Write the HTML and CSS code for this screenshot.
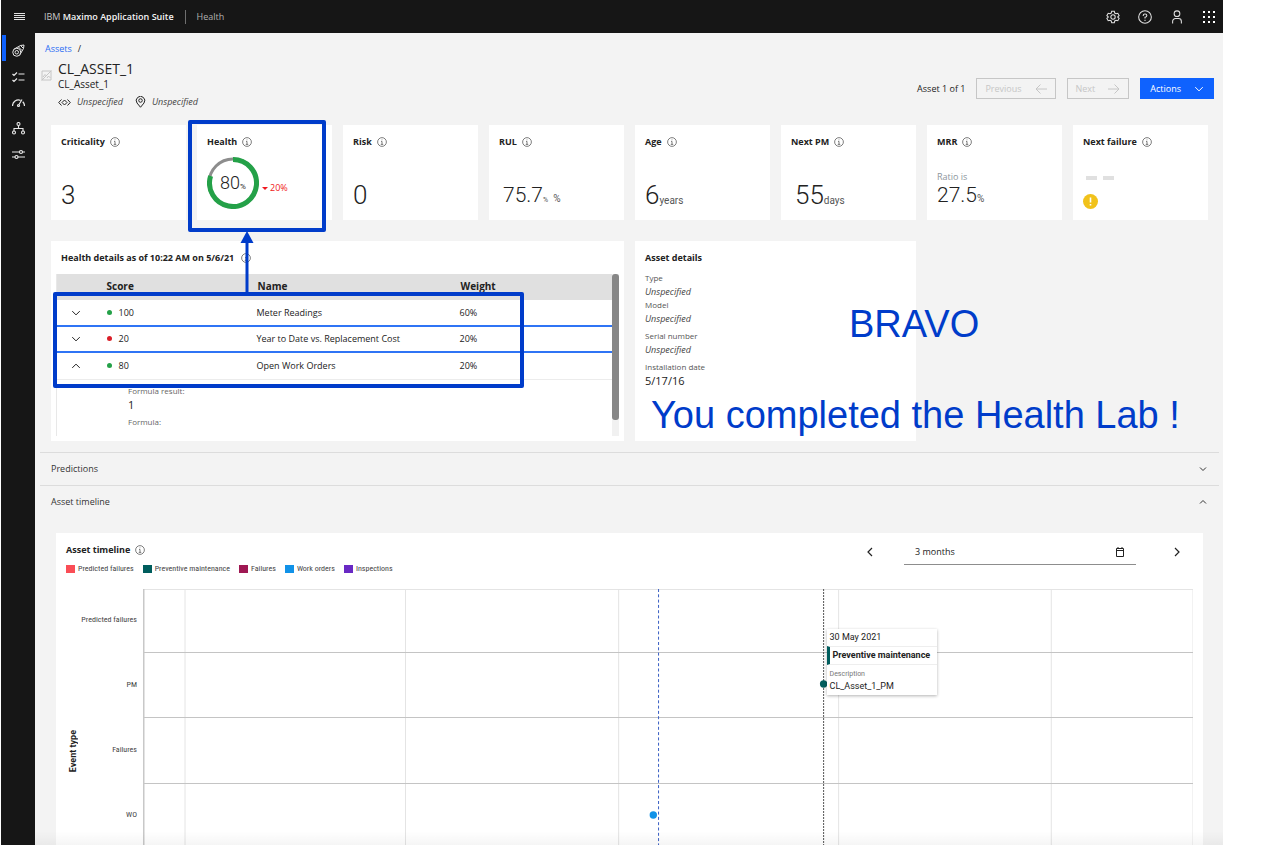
FILE: index.html
```html
<!DOCTYPE html>
<html lang="en">
<head>
<meta charset="utf-8">
<title>Maximo Application Suite - Health</title>
<link rel="stylesheet" href="styles.css">
</head>
<body>
<svg class="defs" aria-hidden="true">
  <symbol id="info" viewBox="0 0 16 16"><circle cx="8" cy="8" r="7" /><path d="M8 11.8V7H6.4M6 11.8h4M7.5 4.4h1" /></symbol>
  <symbol id="down" viewBox="0 0 16 16"><path d="M2 5l6 6 6-6" /></symbol>
  <symbol id="up" viewBox="0 0 16 16"><path d="M2 11l6-6 6 6" /></symbol>
</svg>
<div class="app">
  <header class="topbar">
    <button class="icon-btn menu" aria-label="Menu"><svg class="ico" width="11" height="10" viewBox="0 0 11 10"><path d="M0 1.5h11M0 3.5h11M0 5.5h11M0 7.5h11" /></svg></button>
    <span class="brand">IBM <b>Maximo Application Suite</b></span>
    <span class="product">Health</span>
    <div class="tools">
      <button class="icon-btn" aria-label="Settings"><svg class="ico" width="14" height="14" viewBox="0 0 32 32" stroke-width="2.4"><circle cx="16" cy="16" r="5" /><path d="M13 3h6l1 4 3 1.700 4-1.200 3 5.200-3 2.700v1.200l3 2.700-3 5.200-4-1.200-3 1.700-1 4h-6l-1-4-3-1.700-4 1.200-3-5.200 3-2.700v-1.200l-3-2.700 3-5.200 4 1.200 3-1.700z" /></svg></button>
      <button class="icon-btn" aria-label="Help"><svg class="ico" width="14" height="14" viewBox="0 0 32 32" stroke-width="2.400"><circle cx="16" cy="16" r="14.500" /><path d="M12 13.500v-1a3.500 3.500 0 0 1 3.500-3.500h1a3.700 3.700 0 0 1 0 7.400H16v3M16 22v3" /></svg></button>
      <button class="icon-btn" aria-label="User"><svg class="ico" width="14" height="14" viewBox="0 0 32 32" stroke-width="2.400"><circle cx="16" cy="8.500" r="6.500" /><path d="M6 31v-5a6.500 6.500 0 0 1 6.500-6.500h7A6.500 6.500 0 0 1 26 26v5" /></svg></button>
      <button class="icon-btn" aria-label="App switcher"><svg class="dots" width="14" height="14" viewBox="0 0 14 14"><path d="M1 1h2v2H1zM6 1h2v2H6zM11 1h2v2h-2zM1 6h2v2H1zM6 6h2v2H6zM11 6h2v2h-2zM1 11h2v2H1zM6 11h2v2H6zM11 11h2v2h-2z" /></svg></button>
    </div>
  </header>
  <div class="shell">
    <nav class="rail">
      <a class="rail-item current" href="#assets" aria-label="Assets"><svg class="ico" width="13" height="13" viewBox="0 0 26 26" stroke-width="2"><circle cx="9.500" cy="16.500" r="8" /><circle cx="9.500" cy="16.500" r="3.500" /><path d="M4.500 10L17 3l7-1-1 7-7 12M17 3l6 6M13 6l7 7" /></svg></a>
      <a class="rail-item" href="#work" aria-label="Work"><svg class="ico" width="13" height="13" viewBox="0 0 26 26" stroke-width="2.400"><path d="M13 8h12M13 20h12M1 8l3 3 6-6M1 20l3 3 6-6" /></svg></a>
      <a class="rail-item" href="#scores" aria-label="Scores"><svg class="ico" width="13" height="13" viewBox="0 0 26 26" stroke-width="2.400"><path d="M1 20a12 12 0 0 1 16-11.300M21.500 11.500A12 12 0 0 1 25 20M20 7l-6 10" /><circle cx="13" cy="19" r="2" /></svg></a>
      <a class="rail-item" href="#groups" aria-label="Groups"><svg class="ico" width="13" height="13" viewBox="0 0 26 26" stroke-width="2.200"><circle cx="13" cy="4" r="3" /><circle cx="4" cy="21" r="3" /><circle cx="22" cy="21" r="3" /><path d="M13 7v6M4 18v-5h18v5" /></svg></a>
      <a class="rail-item" href="#settings" aria-label="Configure"><svg class="ico" width="13" height="13" viewBox="0 0 26 26" stroke-width="2.400"><path d="M0 8h15M21 8h5M0 18h6M12 18h14" /><circle cx="18" cy="8" r="3" /><circle cx="9" cy="18" r="3" /></svg></a>
    </nav>
    <main class="main">
      <nav class="crumbs"><a href="#assets">Assets</a><span>/</span></nav>
      <div class="head">
        <svg class="ico noimage" width="11" height="11" viewBox="0 0 22 22" stroke-width="2"><path d="M2 2h18v18H2zM1 21L21 1M4 14l4-5 3 3M12 16l3-4 4 4" /></svg>
        <div class="title-block">
          <h1>CL_ASSET_1</h1>
          <p class="subtitle">CL_Asset_1</p>
          <p class="meta">
            <svg class="ico" width="13" height="9" viewBox="0 0 26 18" stroke-width="2"><path d="M7 3L1.500 9 7 15M19 3l5.500 6-5.500 6M13 4L8 9l5 5 5-5z" /></svg><em>Unspecified</em>
            <svg class="ico pin" width="11" height="12" viewBox="0 0 22 24" stroke-width="2"><path d="M11 22.500L4 14A8.500 8.500 0 1 1 18 14z" /><circle cx="11" cy="9" r="3.500" /></svg><em>Unspecified</em>
          </p>
        </div>
        <div class="actions">
          <span>Asset 1 of 1</span>
          <button class="btn" disabled>Previous <svg class="ico" width="12" height="10" viewBox="0 0 12 10"><path d="M12 5H1M5.500 .5L1 5l4.500 4.500" /></svg></button>
          <button class="btn" disabled>Next <svg class="ico" width="12" height="10" viewBox="0 0 12 10"><path d="M0 5h11M6.500 .5L11 5 6.500 9.500" /></svg></button>
          <button class="btn primary">Actions <svg class="ico" width="10" height="10" stroke-width="1.600"><use href="#down" /></svg></button>
        </div>
      </div>

      <div class="board">
        <section class="card kpi"><h2>Criticality <svg class="info"><use href="#info" /></svg></h2><p class="value xl">3</p></section>
        <section class="card kpi health"><h2>Health <svg class="info"><use href="#info" /></svg></h2>
          <div class="gauge-row">
            <div class="gauge">
              <svg width="52" height="52" viewBox="0 0 52 52"><circle class="rest" cx="26" cy="26" r="24" /><path class="score" d="M26 2.500A23.500 23.500 0 1 1 3.600 19" /></svg>
              <span class="gauge-text">80<small>%</small></span>
            </div>
            <span class="trend">20%</span>
          </div>
        </section>
        <section class="card kpi"><h2>Risk <svg class="info"><use href="#info" /></svg></h2><p class="value xl">0</p></section>
        <section class="card kpi"><h2>RUL <svg class="info"><use href="#info" /></svg></h2><p class="value indent">75.7<small class="tiny">%</small> <small>%</small></p></section>
        <section class="card kpi"><h2>Age <svg class="info"><use href="#info" /></svg></h2><p class="value xl">6<small>years</small></p></section>
        <section class="card kpi"><h2>Next PM <svg class="info"><use href="#info" /></svg></h2><p class="value xl indent">55<small>days</small></p></section>
        <section class="card kpi"><h2>MRR <svg class="info"><use href="#info" /></svg></h2><div class="ratio"><p>Ratio is</p><p class="value">27.5<small>%</small></p></div></section>
        <section class="card kpi"><h2>Next failure <svg class="info"><use href="#info" /></svg></h2>
          <div class="empty"><span class="dashes"><i></i><i></i></span><svg width="15" height="15" viewBox="0 0 15 15"><circle class="warn" cx="7.500" cy="7.500" r="7.500" /><path class="warn-mark" d="M7.500 3.500v5M7.500 10v1.500" /></svg></div>
        </section>

        <section class="card details">
          <h2>Health details as of 10:22 AM on 5/6/21 <svg class="info"><use href="#info" /></svg></h2>
          <div class="scroller">
            <table class="scores">
              <colgroup><col class="c-toggle"><col class="c-score"><col class="c-name"><col></colgroup>
              <thead><tr><th></th><th>Score</th><th>Name</th><th>Weight</th></tr></thead>
              <tbody>
                <tr class="ruled"><td><button class="icon-btn" aria-label="Expand"><svg class="ico" width="10" height="10" stroke-width="1.600"><use href="#down" /></svg></button></td><td><i class="dot good"></i>100</td><td>Meter Readings</td><td>60%</td></tr>
                <tr class="ruled"><td><button class="icon-btn" aria-label="Expand"><svg class="ico" width="10" height="10" stroke-width="1.600"><use href="#down" /></svg></button></td><td><i class="dot bad"></i>20</td><td>Year to Date vs. Replacement Cost</td><td>20%</td></tr>
                <tr class="open"><td><button class="icon-btn" aria-label="Collapse"><svg class="ico" width="10" height="10" stroke-width="1.600"><use href="#up" /></svg></button></td><td><i class="dot good"></i>80</td><td>Open Work Orders</td><td>20%</td></tr>
                <tr><td class="formula" colspan="4"><p class="label">Formula result:</p><p class="result">1</p><p class="label">Formula:</p></td></tr>
              </tbody>
            </table>
            <div class="track"><div class="thumb"></div></div>
          </div>
          <div class="frame-rows"></div>
          <svg class="arrow" width="14" height="62" viewBox="0 0 14 62"><path d="M7 10v52" stroke-width="3" /><path class="tip" d="M7 0l6.500 12H.5z" /></svg>
        </section>

        <section class="card asset">
          <h2>Asset details</h2>
          <dl>
            <dt>Type</dt><dd><em>Unspecified</em></dd>
            <dt>Model</dt><dd class="wide"><em>Unspecified</em></dd>
            <dt>Serial number</dt><dd class="wide"><em>Unspecified</em></dd>
            <dt>Installation date</dt><dd class="date">5/17/16</dd>
          </dl>
          <p class="note bravo">BRAVO</p>
          <p class="note done">You completed the Health Lab !</p>
        </section>
      </div>

      <button class="section-toggle">Predictions <svg class="ico" width="8" height="8" stroke-width="2"><use href="#down" /></svg></button>
      <button class="section-toggle">Asset timeline <svg class="ico" width="8" height="8" stroke-width="2"><use href="#up" /></svg></button>

      <section class="timeline">
        <div class="timeline-head">
          <div>
            <h2>Asset timeline <svg class="info"><use href="#info" /></svg></h2>
            <ul class="legend">
              <li class="k-pred">Predicted failures</li><li class="k-pm">Preventive maintenance</li><li class="k-fail">Failures</li><li class="k-wo">Work orders</li><li class="k-insp">Inspections</li>
            </ul>
          </div>
          <div class="range">
            <button class="icon-btn" aria-label="Earlier"><svg class="ico" width="10" height="10" viewBox="0 0 10 10" stroke-width="1.200"><path d="M7 1L3 5l4 4" /></svg></button>
            <label class="period"><input type="text" value="3 months" aria-label="Period"><svg class="ico" width="10" height="10" viewBox="0 0 10 10"><path d="M1.500 1.500h7v8h-7zM1.500 3.500h7M3 0v2M7 0v2" /></svg></label>
            <button class="icon-btn" aria-label="Later"><svg class="ico" width="10" height="10" viewBox="0 0 10 10" stroke-width="1.200"><path d="M3 1l4 4-4 4" /></svg></button>
          </div>
        </div>
        <div class="chart">
          <div class="axis-title">Event type</div>
          <div class="axis"><span>Predicted failures</span><span>PM</span><span>Failures</span><span>WO</span></div>
          <div class="plot">
            <svg class="grid" width="100%" height="100%">
              <g stroke="#e4e4e4"><path d="M0 .5h4000" /><line x1="4%" x2="4%" y1="0" y2="100%" /><line x1="25%" x2="25%" y1="0" y2="100%" /><line x1="45.300%" x2="45.300%" y1="0" y2="100%" /><line x1="66.250%" x2="66.250%" y1="0" y2="100%" /><line x1="86.500%" x2="86.500%" y1="0" y2="100%" /><line x1="100%" x2="100%" y1="0" y2="100%" /></g>
              <path stroke="#c4c4c4" d="M0 63.500h4000M0 128.500h4000M0 194.500h4000" />
              <path stroke="#c8c8c8" stroke-width="3" d="M0 0v262" />
              <line x1="49.100%" x2="49.100%" y1="0" y2="100%" stroke="#3a5fc4" stroke-dasharray="3 2.300" />
              <line x1="64.820%" x2="64.820%" y1="0" y2="100%" stroke="#555" stroke-dasharray="2 1" />
              <circle cx="48.600%" cy="226" r="3.700" fill="#1192e8" /><circle cx="64.820%" cy="95" r="3.700" fill="#005d5d" />
            </svg>
            <div class="tip-card"><p>30 May 2021</p><p class="tip-kind">Preventive maintenance</p><p class="tip-body"><small>Description</small>CL_Asset_1_PM</p></div>
          </div>
        </div>
      </section>
    </main>
  </div>
</div>
</body>
</html>
```

FILE: styles.css
```css
* { box-sizing: border-box; }
body { margin: 0; background: #fff; color: #222; font: 9px/14px "Open Sans", "Noto Sans", sans-serif; }
h1, h2, p, ul, dl, dd { margin: 0; padding: 0; }
button, input { font: inherit; color: inherit; }
.defs { display: none; }
.ico, .info { fill: none; stroke: currentColor; flex: none; }
.info { width: 10px; height: 10px; stroke-width: 1.1; color: #444; }
.icon-btn { display: flex; padding: 0; border: 0; background: none; }
.app { display: flex; flex-direction: column; height: 100vh; margin: 0 39px 0 1px; overflow: hidden; }

.topbar { display: flex; align-items: center; flex: none; height: 33px; padding: 0 7px 0 13px; background: #161616; color: #e0e0e0; }
.brand { margin-left: 19px; padding-right: 11px; color: #c6c6c6; }
.brand b { color: #f4f4f4; font-weight: 600; }
.product { padding-left: 11px; border-left: 1px solid #6f6f6f; color: #b0b0b0; }
.tools { display: flex; gap: 18px; margin-left: auto; }
.dots { fill: #fff; }

.shell { display: flex; flex: 1; min-height: 0; }
.rail { flex: none; width: 34px; padding: 4px 0 0 1px; background: #161616; color: #e8e8e8; }
.rail-item { position: relative; display: flex; align-items: center; justify-content: center; height: 26px; color: inherit; }
.current::before { content: ""; position: absolute; left: 0; top: -2px; width: 4px; height: 26px; background: #0f62fe; }

.main { position: relative; flex: 1; min-width: 0; padding-top: 9px; background: #f3f3f3; overflow: hidden; }
.main::after { content: ""; position: absolute; left: 0; right: 0; bottom: 0; height: 14px; background: linear-gradient(transparent, rgba(0, 0, 0, .04)); }
.crumbs { display: flex; gap: 6px; padding-left: 10px; }
.crumbs a { color: #2a6df4; text-decoration: none; }
.head { display: flex; padding: 5px 9px 16px 6px; }
.noimage { margin: 9px 6px 0 0; color: #c6c6c6; }
h1 { font-size: 14px; line-height: 16px; font-weight: 400; }
.subtitle { font-size: 10px; }
.meta { display: flex; align-items: center; gap: 6px; margin-top: 4px; color: #444; }
.meta .pin { margin-left: 6px; }
.meta .ico { color: #222; }
.actions { display: flex; align-items: center; align-self: flex-start; gap: 11px; margin: 17px 0 0 auto; }
.btn { display: flex; align-items: center; gap: 13px; height: 21px; padding: 0 8px; border: 1px solid #c6c6c6; background: none; color: #c6c6c6; }
.btn.primary { padding: 0 9px; border-color: #0f62fe; background: #0f62fe; color: #fff; }

.board { display: grid; grid-template-columns: repeat(8, 1fr); column-gap: 11px; row-gap: 21px; padding: 0 15px 11px 16px; }
.card { position: relative; background: #fff; }
h2 { display: flex; align-items: center; gap: 5px; font-size: 9px; line-height: 14px; font-weight: 700; }
.kpi { display: flex; flex-direction: column; height: 95px; padding: 10px 10px 11px; }
.value { margin-top: auto; font-family: Roboto, sans-serif; font-size: 21px; line-height: 28px; font-weight: 300; }
.value.xl { font-size: 26px; }
.value.indent { padding-left: 4px; }
.value small { font-size: 10px; line-height: 1; font-weight: 400; color: #555; }
.value .tiny { font-size: 7px; }
.ratio { margin-top: auto; }
.ratio p:first-child { margin-bottom: -3px; color: #8d959c; }
.health::after { content: ""; position: absolute; inset: -5px 6px -12px -9px; border: 4px solid #003cca; border-radius: 2px; }
.gauge-row { display: flex; align-items: center; gap: 3px; margin-top: 8px; }
.gauge { display: grid; flex: none; place-items: center; }
.gauge > * { grid-area: 1 / 1; }
.gauge circle, .gauge path { fill: none; }
.rest { stroke: #8d8d8d; stroke-width: 3; }
.score { stroke: #24a148; stroke-width: 5; }
.gauge-text { font-family: Roboto, sans-serif; font-size: 18px; line-height: 20px; font-weight: 300; }
.gauge-text small { font-size: 8px; line-height: 1; font-weight: 400; }
.trend { display: flex; align-items: center; gap: 2px; padding-top: 10px; color: #f01820; }
.trend::before { content: ""; border: 3px solid transparent; border-top-color: #f01820; border-bottom: 0; }
.empty { display: flex; flex-direction: column; gap: 14px; margin-top: auto; }
.dashes { display: flex; gap: 6px; padding-left: 3px; }
.dashes i { width: 11px; height: 4px; background: #e0e0e0; }
.warn { fill: #f1c21b; }
.warn-mark { stroke: #fff; stroke-width: 1.6; }

.details { grid-column: span 4; height: 200px; padding: 10px 5px 5px; }
.details h2 { gap: 7px; padding-left: 5px; }
.scroller { display: flex; height: 162px; margin-top: 9px; overflow: hidden; }
.scores { flex: 1; height: 100%; border-collapse: collapse; table-layout: fixed; border-left: 1px solid #e8e8e8; }
.c-toggle { width: 49px; }
.c-score { width: 151px; }
.c-name { width: 203px; }
th { height: 26px; padding: 0 1px 2px; background: #e0e0e0; font-size: 10px; font-weight: 700; text-align: left; }
td { height: 26px; padding: 0; }
td .icon-btn { margin-left: 14px; }
.ruled td { border-bottom: 2px solid #2f74f5; }
.open td { height: 27px; border-bottom: 1px solid #ececec; }
.dot { display: inline-block; width: 5px; height: 5px; margin: 0 7px 1px 1px; border-radius: 50%; }
.good { background: #24a148; }
.bad { background: #da1e28; }
td.formula { height: 57px; padding: 3px 0 0 71px; vertical-align: top; }
.label { color: #666; font-size: 8px; line-height: 16px; }
.result { font-size: 11px; line-height: 12px; margin-bottom: 3px; }
.track { flex: none; width: 7px; background: #f1f1f1; }
.thumb { height: 146px; border-radius: 3px; background: #878787; }
.frame-rows { position: absolute; left: 2px; right: 100px; top: 51px; height: 96px; border: 4px solid #003cca; border-radius: 2px; }
.arrow { position: absolute; left: 189px; top: -10px; stroke: #003cca; }
.arrow .tip { fill: #003cca; stroke: none; }

.asset { grid-column: span 2; padding: 10px; }
.asset dl { margin-top: 6px; }
.asset dt { color: #555; font-size: 8px; line-height: 14px; }
.asset dd { line-height: 13px; color: #444; }
.asset dd.wide { margin-bottom: 4px; }
.asset dd.date { font-size: 11px; color: #222; }
.note { position: absolute; color: #003cca; font: 38px/44px "Liberation Sans", Arial, sans-serif; white-space: nowrap; }
.bravo { left: 214px; top: 61px; }
.done { left: 16px; top: 152px; }

.section-toggle { display: flex; align-items: center; justify-content: space-between; width: calc(100% - 9px); height: 33px; margin-left: 5px; padding: 0 12px 0 11px; border: 0; border-top: 1px solid #dcdcdc; background: none; color: #333; }
.timeline { margin: 15px 20px 0 21px; background: #fff; }
.timeline-head { display: flex; justify-content: space-between; height: 56px; padding: 10px 21px 0 10px; }
.legend, .axis { color: #444; font: 8px/14px "Roboto Condensed", Roboto, sans-serif; }
.legend { display: flex; gap: 9px; margin-top: 5px; list-style: none; }
.legend li { display: flex; align-items: center; gap: 3px; }
.legend li::before { content: ""; width: 9px; height: 8px; }
.k-pred::before { background: #fa4d56; }
.k-pm::before { background: #005d5d; }
.k-fail::before { background: #9f1853; }
.k-wo::before { background: #1192e8; }
.k-insp::before { background: #6929c4; }
.range { display: flex; align-items: center; align-self: flex-start; gap: 29px; height: 18px; }
.range > :last-child { margin-left: 7px; }
.period { display: flex; align-items: center; width: 232px; height: 26px; padding: 0 11px; border-bottom: 1px solid #8d8d8d; }
.period input { flex: 1; min-width: 0; padding: 0; border: 0; background: none; }
.chart { display: flex; height: 262px; padding: 0 10px 0 10px; }
.axis-title { align-self: flex-start; width: 14px; margin-top: 141px; writing-mode: vertical-rl; transform: rotate(180deg); font: 700 9px/14px Roboto, sans-serif; }
.axis { display: grid; grid-template-rows: repeat(4, 65px); flex: none; width: 63px; padding-right: 6px; margin-top: -2px; align-items: center; justify-items: end; white-space: nowrap; }
.plot { position: relative; flex: 1; }
.grid { display: block; }
.tip-card { position: absolute; left: 65.1%; top: 40px; width: 110px; height: 66px; background: #fff; box-shadow: 0 1px 3px rgba(0, 0, 0, .3); font-family: Roboto, sans-serif; }
.tip-card p { height: 17px; padding-left: 3px; line-height: 17px; }
.tip-card .tip-kind { height: 19px; padding-left: 3px; border: 0 solid #eee; border-width: 1px 0; border-left: 3px solid #005d5d; font-weight: 700; }
.tip-card .tip-body { display: flex; flex-direction: column; padding-top: 3px; line-height: 13px; }
.tip-body small { font-size: 7px; line-height: 12px; color: #777; }
```
